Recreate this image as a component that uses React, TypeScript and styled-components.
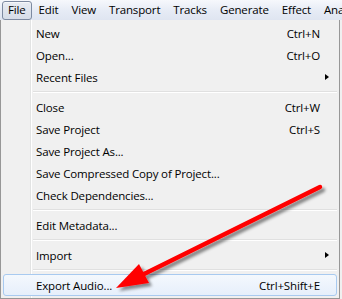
import styled, { createGlobalStyle } from "styled-components";

const GlobalStyle = createGlobalStyle`
  html, body {
    margin: 0;
    padding: 0;
    background: #f0f0f0;
    overflow: hidden;
  }
  body {
    font-family: "Open Sans", "Noto Sans", sans-serif;
    font-size: 11.5px;
    letter-spacing: -0.15px;
    color: #000;
  }
`;

type Item =
  | { kind: "item"; label: string; shortcut?: string; submenu?: boolean; active?: boolean }
  | { kind: "sep" };

const menuBarItems = ["File", "Edit", "View", "Transport", "Tracks", "Generate", "Effect", "Analyze"];

const fileMenu: Item[] = [
  { kind: "item", label: "New", shortcut: "Ctrl+N" },
  { kind: "item", label: "Open...", shortcut: "Ctrl+O" },
  { kind: "item", label: "Recent Files", submenu: true },
  { kind: "sep" },
  { kind: "item", label: "Close", shortcut: "Ctrl+W" },
  { kind: "item", label: "Save Project", shortcut: "Ctrl+S" },
  { kind: "item", label: "Save Project As..." },
  { kind: "item", label: "Save Compressed Copy of Project..." },
  { kind: "item", label: "Check Dependencies..." },
  { kind: "sep" },
  { kind: "item", label: "Edit Metadata..." },
  { kind: "sep" },
  { kind: "item", label: "Import", submenu: true },
  { kind: "sep" },
  { kind: "item", label: "Export Audio...", shortcut: "Ctrl+Shift+E", active: true },
];

const App = () => {
  return (
    <Page>
      <GlobalStyle />
      <MenuBar>
        {menuBarItems.map((name, i) => (
          <MenuBarItem key={name} $open={i === 0}>
            {name}
          </MenuBarItem>
        ))}
      </MenuBar>
      <Dropdown>
        <Gutter />
        {fileMenu.map((item, i) =>
          item.kind === "sep" ? (
            <Separator key={i} />
          ) : (
            <Row key={i} $active={item.active}>
              <Label>{item.label}</Label>
              <Shortcut>{item.shortcut}</Shortcut>
              <SubCell>{item.submenu && <SubArrow />}</SubCell>
            </Row>
          )
        )}
      </Dropdown>
      <Callout viewBox="0 0 342 299" width="342" height="299">
        <defs>
          <filter id="shadow" x="-10%" y="-10%" width="130%" height="140%">
            <feDropShadow dx="3" dy="3" stdDeviation="1.6" floodColor="#000" floodOpacity="0.45" />
          </filter>
        </defs>
        <g filter="url(#shadow)">
          <line x1="320" y1="187" x2="140" y2="276" stroke="#ff0000" strokeWidth="4.5" strokeLinecap="round" />
          <polygon points="116,288 139,264 149,283" fill="#ff0000" />
        </g>
      </Callout>
    </Page>
  );
};

export default App;

const Page = styled.div`
  position: relative;
  width: 342px;
  height: 299px;
  overflow: hidden;
  background: #f0f0f0;
`;

const MenuBar = styled.div`
  display: flex;
  align-items: center;
  height: 20px;
  padding-left: 2px;
  background: linear-gradient(180deg, #f6f8fc 0%, #e6ebf5 55%, #dfe5f1 100%);
  white-space: nowrap;
  overflow: hidden;
`;

const MenuBarItem = styled.div<{ $open?: boolean }>`
  height: 17px;
  line-height: 16px;
  padding: 0 5px;
  margin-right: 1px;
  border: 1px solid ${(p) => (p.$open ? "#7d8aa1" : "transparent")};
  border-radius: 3px;
  background: ${(p) =>
    p.$open ? "linear-gradient(180deg, #e8ecf3 0%, #d6dde8 100%)" : "transparent"};
  box-shadow: ${(p) => (p.$open ? "inset 0 1px 0 rgba(255,255,255,0.6)" : "none")};
`;

const Dropdown = styled.div`
  position: relative;
  width: 334px;
  padding: 2px;
  border: 1px solid #979797;
  border-top: none;
  background: #f0f0f0;
  display: flex;
  flex-direction: column;
`;

const Gutter = styled.div`
  position: absolute;
  top: 0;
  bottom: 0;
  left: 29px;
  width: 1px;
  background: #e2e3e3;
  border-right: 1px solid #ffffff;
`;

const Row = styled.div<{ $active?: boolean }>`
  position: relative;
  display: flex;
  align-items: center;
  height: 22px;
  box-sizing: border-box;
  padding-left: 32px;
  border: 1px solid ${(p) => (p.$active ? "#a8caf0" : "transparent")};
  border-radius: 3px;
  background: ${(p) =>
    p.$active ? "linear-gradient(180deg, #f4f8fd 0%, #e6effb 100%)" : "transparent"};
`;

const Label = styled.span`
  flex: 1;
  white-space: nowrap;
`;

const Shortcut = styled.span`
  white-space: nowrap;
  text-align: right;
`;

const SubCell = styled.span`
  width: 16px;
  height: 100%;
  display: flex;
  align-items: center;
  padding-left: 5px;
  box-sizing: border-box;
`;

const SubArrow = styled.span`
  width: 0;
  height: 0;
  border-top: 3.5px solid transparent;
  border-bottom: 3.5px solid transparent;
  border-left: 4px solid #000;
`;

const Separator = styled.div`
  height: 8px;
  margin-left: 30px;
  display: flex;
  align-items: center;

  &::before {
    content: "";
    flex: 1;
    height: 1px;
    background: #e0e0e0;
    border-bottom: 1px solid #ffffff;
  }
`;

const Callout = styled.svg`
  position: absolute;
  left: 0;
  top: 0;
  pointer-events: none;
`;
